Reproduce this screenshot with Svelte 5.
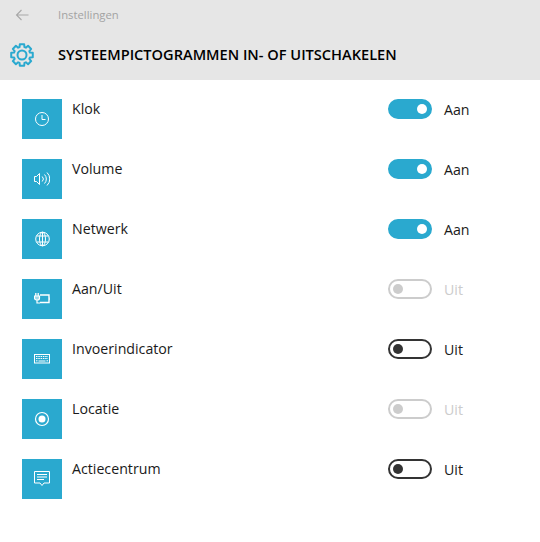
<script>
	const rows = [
		{ name: 'Klok', icon: 'clock', state: 'on' },
		{ name: 'Volume', icon: 'volume', state: 'on' },
		{ name: 'Netwerk', icon: 'globe', state: 'on' },
		{ name: 'Aan/Uit', icon: 'power', state: 'disabled' },
		{ name: 'Invoerindicator', icon: 'keyboard', state: 'off' },
		{ name: 'Locatie', icon: 'location', state: 'disabled' },
		{ name: 'Actiecentrum', icon: 'action', state: 'off' }
	]

	// eight teeth, one pointing straight up
	function gearPath(cx, cy, outer, inner) {
		let d = ''
		for (let i = 0; i < 8; i++) {
			const a = (i * Math.PI) / 4 - Math.PI / 2
			const pts = [
				[inner, a - 0.3],
				[outer, a - 0.2],
				[outer, a + 0.2],
				[inner, a + 0.3]
			]
			for (const [r, t] of pts) {
				d += `${d ? 'L' : 'M'}${(cx + r * Math.cos(t)).toFixed(2)} ${(cy + r * Math.sin(t)).toFixed(2)}`
			}
		}
		return d + 'z'
	}
</script>

<div class="page">
	<header>
		<div class="nav">
			<svg class="back" width="14" height="12" viewBox="0 0 14 12" fill="none" stroke="#a8a8a8" stroke-width="1.1">
				<path d="M13.500 6H1.500M6.500 1l-5 5 5 5" />
			</svg>
			<span>Instellingen</span>
		</div>
		<div class="heading">
			<svg class="gear" width="26" height="26" viewBox="0 0 26 26" fill="none" stroke="#2aa9cf" stroke-width="2" stroke-linejoin="round">
				<path d={gearPath(13, 13, 11, 8.300)} />
				<circle cx="13" cy="13" r="4.500" />
			</svg>
			<h1>SYSTEEMPICTOGRAMMEN IN- OF UITSCHAKELEN</h1>
		</div>
	</header>

	<main>
		{#each rows as row}
			<div class="row">
				<div class="tile">
					<svg width="16" height="16" viewBox="0 0 16 16" fill="none" stroke="#fff" stroke-width="1">
						{#if row.icon === 'clock'}
							<circle cx="8" cy="8" r="6.500" />
							<path d="M8 4v4.500h3.500" />
						{:else if row.icon === 'volume'}
							<path d="M.5 5.500h2L5.500 2.500v11l-3-3h-2z" />
							<path d="M8.200 5.500a3.500 3.500 0 0 1 0 5M10.500 3.500a6.400 6.400 0 0 1 0 9M13 1.500a9 9 0 0 1 0 13" />
						{:else if row.icon === 'globe'}
							<circle cx="8.500" cy="8" r="6.800" />
							<ellipse cx="8.500" cy="8" rx="3" ry="6.800" />
							<path d="M8.500 1.200v13.600M2.500 5h12M2.500 11h12" />
						{:else if row.icon === 'power'}
							<path d="M6 4h9v7.500H6" stroke-width="1.400" />
							<path d="M16 6.500v2.500" stroke-width="1.200" />
							<path d="M.5 5h5v2a2 2 0 0 1-2 2h-1a2 2 0 0 1-2-2z" fill="#fff" fill-opacity=".55" stroke-width="1.200" />
							<path d="M1.800 2v3M4.200 2v3" stroke-width="1.300" />
							<path d="M3 9v3h3" stroke-width="1.200" />
						{:else if row.icon === 'keyboard'}
							<rect x=".5" y="3.500" width="15" height="8.500" />
							<path d="M2 5.500h12M2 7.500h12" stroke-dasharray="1.500 .8" />
							<path d="M2 9.800h1.500M4.500 10h7M12.500 9.800H14" />
						{:else if row.icon === 'location'}
							<circle cx="8" cy="8" r="6.500" stroke-width="1.200" />
							<circle cx="8" cy="8" r="3.500" fill="#fff" stroke="none" />
						{:else}
							<path d="M.5 .5h15v11.500H10l-2 2.500-2-2.500H.5z" />
							<path d="M3 3.500h10M3 6h10M3 8.500h7" />
						{/if}
					</svg>
				</div>
				<div class="name">{row.name}</div>
				<div class="control {row.state}">
					<span class="switch"><span class="knob"></span></span>
					<span class="label">{row.state === 'on' ? 'Aan' : 'Uit'}</span>
				</div>
			</div>
		{/each}
	</main>
</div>

<style>
	:global(body) {
		margin: 0;
		background: #fff;
	}
	.page {
		width: 540px;
		height: 542px;
		font-family: 'Open Sans', 'Liberation Sans', sans-serif;
		color: #1a1a1a;
		overflow: hidden;
	}
	header {
		background: #e6e6e6;
		height: 80px;
	}
	.nav {
		display: flex;
		align-items: center;
		height: 28px;
		padding-left: 15px;
		color: #a3a3a3;
		font-size: 11.300px;
	}
	.back {
		margin: 2px 29px 0 0;
	}
	.heading {
		display: flex;
		align-items: center;
		height: 52px;
		padding-left: 9px;
		box-sizing: border-box;
	}
	.gear {
		margin-top: 2px;
	}
	h1 {
		margin: 0 0 0 23px;
		font-size: 14.600px;
		font-weight: 600;
		color: #000;
		white-space: nowrap;
	}
	main {
		padding: 19px 0 0 22px;
	}
	.row {
		display: flex;
		height: 60px;
		font-size: 14.200px;
	}
	.tile {
		display: flex;
		align-items: center;
		justify-content: center;
		width: 40px;
		height: 40px;
		background: #2aa9cf;
	}
	.name {
		width: 316px;
		margin-left: 10px;
		line-height: 20px;
	}
	.control {
		display: flex;
		align-items: center;
		height: 20px;
	}
	.switch {
		display: flex;
		align-items: center;
		box-sizing: border-box;
		width: 44px;
		height: 20px;
		margin-right: 12px;
		padding: 0 3px;
		border: 2px solid #333;
		border-radius: 10px;
	}
	.knob {
		width: 10px;
		height: 10px;
		border-radius: 50%;
		background: #333;
	}
	.on .switch {
		justify-content: flex-end;
		background: #2aa9cf;
		border-color: #2aa9cf;
	}
	.on .knob {
		background: #fff;
	}
	.disabled .switch {
		border-color: #ccc;
	}
	.disabled .knob {
		background: #ccc;
	}
	.disabled .label {
		color: #ccc;
	}
</style>
